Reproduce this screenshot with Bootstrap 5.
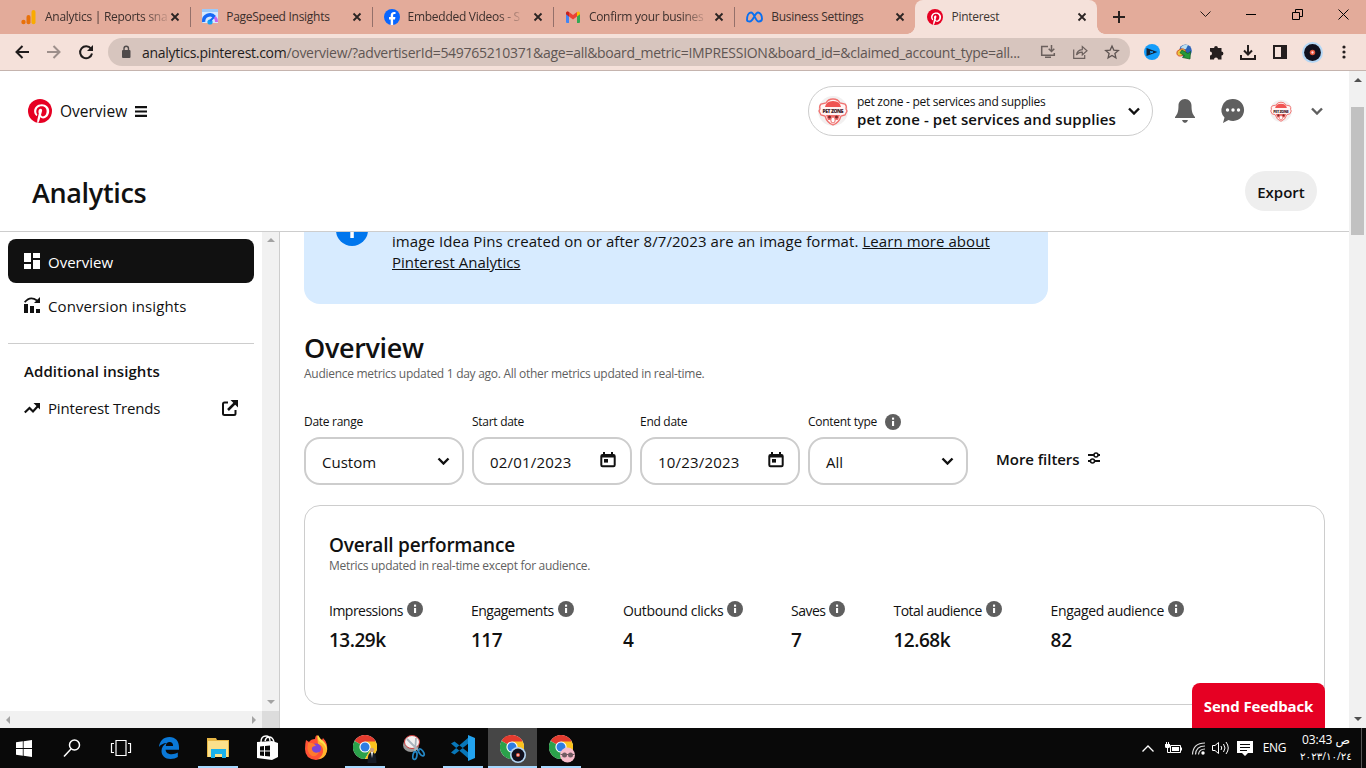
<!DOCTYPE html>
<html lang="en">
<head>
<meta charset="utf-8">
<title>Pinterest</title>
<link href="https://cdn.jsdelivr.net/npm/bootstrap@5.3.0/dist/css/bootstrap.min.css" rel="stylesheet">
<style>
html,body{height:100%;overflow:hidden}
body{font-family:"Open Sans","Noto Sans",sans-serif;font-stretch:92%;color:#111;font-size:16px;background:#fff}
svg{display:block;flex:none;overflow:visible}
.desktop{width:1366px;height:768px}
.t{white-space:nowrap;display:block}
.semi{font-weight:600}
/* browser frame */
.tabstrip{height:34px;background:#e3ab9a;padding-left:9px;font-size:12px;color:#3c2f2c;letter-spacing:-.28px}
.btab{width:181.3px;height:34px;padding-left:12px;padding-right:6px;position:relative}
.btab .ttl{margin-left:8px;white-space:nowrap;line-height:18px}
.btab.fade-end .ttl{-webkit-mask-image:linear-gradient(90deg,#000 80%,transparent 104%)}
.btab.sep::after{content:"";position:absolute;right:-1px;top:7px;width:1px;height:20px;background:#94706a}
.btab.current{background:#f5e1da;border-radius:8px 8px 0 0;color:#3c3533}
.btab.current::before{content:"";position:absolute;left:-8px;bottom:0;width:8px;height:8px;background:radial-gradient(circle at 0 0,transparent 7.5px,#f5e1da 8px)}
.btab.current::after{content:"";position:absolute;right:-8px;bottom:0;width:8px;height:8px;background:radial-gradient(circle at 100% 0,transparent 7.5px,#f5e1da 8px)}
.winctl{width:46px;height:28px}
.toolbar{height:37px;background:#f5e1da;border-bottom:1px solid #c5b4ae;padding-left:6px;padding-right:6px}
.cell{width:32px;height:36px}
.omni{width:1022px;height:28px;border-radius:14px;background:#d7c5be;margin-left:6px;margin-right:6px;padding-left:12px;padding-right:2px;font-size:14px;color:#5f5653}
.omni .host{color:#1f1d1d}
.omni .url{width:890px;margin-left:10px;white-space:nowrap;letter-spacing:-.28px}
/* page */
.viewport{height:657px}
.topbar{height:161px;border-bottom:1px solid #cdcdcd}
.navline{height:80px;padding:0 26px 0 28px}
.navtxt{font-size:15.5px;padding-top:2px}
.acct{width:345px;height:50px;border:1px solid #cdcdcd;border-radius:25px;padding:0 12px 0 9px}
.acctxt{padding-left:1px;padding-top:1px}
.a1{font-size:12px;line-height:15px;letter-spacing:-.28px}
.a2{font-size:15px;line-height:21px;letter-spacing:.08px}
.bell{margin-left:21px}.chat{margin-left:26px}.ava{margin-left:26px}.last{margin-left:19px}
.titleline{height:80px;padding:0 32px}
.h-an{font-size:27px;letter-spacing:-.35px;padding-top:4px}
.export{width:72px;height:40px;border-radius:20px;background:#eee;line-height:42px;font-size:15px}
.side{width:280px;border-right:1px solid #cdcdcd}
.sidelist{padding-top:7px;font-size:15px}
.sitem{height:44px;padding:0 16px;border-radius:8px;gap:8px}
.sitem.on{background:#111;color:#fff}
.s1,.s2{padding-top:2px}
.s2{letter-spacing:.1px}
.s3{padding-left:16px;line-height:24px;letter-spacing:.06px}
.s4{letter-spacing:-.18px}
.trends{margin-top:3px}
.rule{height:1px;background:#cdcdcd;margin:16px 0 15px}
.hbar{height:17px}
.corner{width:17px;background:#dcdcdc}
.sbar{background:#f1f1f1}
.pagebar{width:17px}
.thumb{width:13px;height:128px;background:#c1c1c1;margin-top:24px}
.notice{width:744px;height:72px;background:#d7ebff;border-radius:0 0 16px 16px;padding-left:88px;font-size:15px;line-height:21px;position:relative}
.notice a{color:#111}
.notice .t{position:relative;top:-1px}
.notice .ic{position:absolute;left:32px;top:-18px}
.n1{letter-spacing:.075px}
.h-ov{font-size:27px;line-height:32px;margin-top:28px;letter-spacing:-.35px}
.sub12{font-size:12px;line-height:18px;color:#5f5f5f;letter-spacing:-.285px}
.u1{margin-top:1px}
.filters{margin-top:23px}
.flabel{font-size:12px;height:31px;line-height:32px;letter-spacing:-.28px}
.fld{width:160px;height:48px;border:2px solid #cdcdcd;border-radius:16px;padding:2px 12px 0 16px;font-size:15px}
.fld .cal{margin-right:2px;margin-top:-4px}
.fld .chv{margin-top:-3px}
.f2{letter-spacing:.18px}
.more{margin-left:20px;padding-top:28px;font-size:15px}
.mf{letter-spacing:-.05px}
.perf{width:1021px;height:200px;border:1px solid #cdcdcd;border-radius:16px;padding:27px 24px 0;margin-top:20px}
.h-pf{font-size:19px;line-height:24px;letter-spacing:-.22px}
.metrics{display:grid;grid-template-columns:142px 152px 168px 102.5px 157px auto;margin-top:26px}
.mlabel{font-size:14px;line-height:20px;letter-spacing:-.34px}
.mlabel.tight{letter-spacing:-.52px}
.mval{font-size:19px;line-height:24px;margin-top:7px}
.mval.tight{letter-spacing:-.5px}
.feedback{position:absolute;left:1192px;top:683px;width:133px;height:45px;border-radius:8px 8px 0 0;background:#e60023;color:#fff;line-height:47px;text-align:center;font-weight:700;font-size:15px;letter-spacing:-.15px}
/* taskbar */
.taskbar{height:40px;background:#090909;color:#fff}
.task{width:49px;height:40px;position:relative}
.task.sys{width:48.300px}
.task.run::after{content:"";position:absolute;left:4px;right:5px;bottom:0;height:2px;background:#a6d8ff}
.task.act{background:#464646}
.task.act::after{left:0;right:0}
.tray{font-size:12px}
.bat{margin-left:11px}.wifi{margin-left:10px}.vol{margin-left:7px}.note{margin-left:8px}
.eng{margin-left:10px;letter-spacing:-.4px}
.clock{width:60px;line-height:17px;font-family:"Open Sans","DejaVu Sans",sans-serif;font-size:12px;letter-spacing:-.1px;margin-left:10px}
.clock bdo{font-size:10.300px;display:block}
.peek{width:1px;height:40px;background:#555;margin-left:5px;margin-right:4px}
</style>
</head>
<body>
<svg width="0" height="0" class="position-absolute">
<defs>
<symbol id="x" viewBox="0 0 10 10"><path d="M1.500 1.500l7 7M8.500 1.500l-7 7" stroke="#2b2423" stroke-width="1.800" fill="none"/></symbol>
<symbol id="pin" viewBox="0 0 24 24"><circle cx="12" cy="12" r="12" fill="#e60023"/><path fill="#fff" d="M9.300 23.700c-.1-1-.1-2.300.1-3.300l1.400-6s-.35-.7-.35-1.750c0-1.650.95-2.900 2.150-2.900 1 0 1.500.75 1.500 1.670 0 1-.65 2.540-1 3.950-.28 1.180.6 2.140 1.760 2.140 2.100 0 3.730-2.220 3.730-5.430 0-2.840-2.040-4.820-4.950-4.820-3.370 0-5.350 2.530-5.350 5.150 0 1 .39 2.100.88 2.700.1.120.11.220.08.340l-.33 1.330c-.05.22-.17.260-.4.160-1.470-.69-2.400-2.840-2.400-4.570 0-3.720 2.700-7.140 7.800-7.140 4.100 0 7.270 2.920 7.270 6.820 0 4.070-2.560 7.340-6.120 7.340-1.200 0-2.320-.62-2.700-1.350l-.74 2.800c-.27 1.030-1 2.320-1.480 3.100z"/></symbol>
<symbol id="chev" viewBox="0 0 12 8"><path d="M1 1.500l5 5 5-5" fill="none" stroke="currentColor" stroke-width="2.400"/></symbol>
<symbol id="info" viewBox="0 0 16 16"><circle cx="8" cy="8" r="8" fill="#5f5f5f"/><rect x="7" y="3.600" width="2.100" height="2.100" fill="#fff"/><rect x="7" y="7" width="2.100" height="5" fill="#fff"/></symbol>
<symbol id="cal" viewBox="0 0 16 16"><path fill="#111" fill-rule="evenodd" d="M3 0h2v2h6V0h2v2h.500A2.200 2.200 0 0 1 15.700 4.200V13a2.200 2.200 0 0 1-2.200 2.200h-11A2.200 2.200 0 0 1 .3 13V4.200A2.200 2.200 0 0 1 2.500 2H3zM2.300 5.400V13c0 .2.100.3.300.3h10.800c.2 0 .3-.1.300-.3V5.400z"/><rect x="4" y="7" width="4" height="3.600" fill="#111"/></symbol>
<symbol id="pet" viewBox="0 0 30 30"><circle cx="15" cy="15" r="15" fill="#f2f0f0"/><path d="M8 7q2-4 7-4t7 4l5 1q2 2 1 5l1 2-2 4-4 1q-2 7-8 9-6-2-8-9l-4-1-2-4 1-2q-1-3 1-5z" fill="#fff4f3" stroke="#f0716f" stroke-width="1.300"/><path d="M7 11q1-6 8-6t8 6z" fill="#f05452"/><path d="M8 19h14l-2 5h-3l-2-3-2 3h-3z" fill="#ee6b69"/><circle cx="11.500" cy="21" r="1.500" fill="#7d2928"/><circle cx="18.500" cy="21" r="1.500" fill="#7d2928"/><ellipse cx="15" cy="24" rx="2.200" ry="3" fill="#fff" stroke="#ee6b69"/><text x="4.500" y="17.300" font-family="Open Sans" font-weight="800" font-size="5" textLength="21" fill="#40232b">PET ZONE</text></symbol>
<symbol id="chrome" viewBox="0 0 24 24"><circle cx="12" cy="12" r="12" fill="#fff"/><path d="M12 12L1.600 6A12 12 0 0 1 22.400 6z" fill="#e33b2e"/><path d="M1.600 6A12 12 0 0 0 12 24l5.200-9-5.200-3z" fill="#2ba14b"/><path d="M22.400 6A12 12 0 0 1 12 24l5.200-9L12 6z" fill="#fcc31e"/><path d="M12 6.500H22.600L20 3H4z" fill="#e33b2e"/><circle cx="12" cy="12" r="5.600" fill="#fff"/><circle cx="12" cy="12" r="4.500" fill="#2f7de1"/></symbol>
<symbol id="vinyl" viewBox="0 0 20 20"><circle cx="10" cy="10" r="10" fill="#b5d7f5"/><circle cx="10" cy="10" r="8" fill="#10101e"/><circle cx="10" cy="10" r="2.600" fill="#e2553b"/><circle cx="10" cy="10" r="1.100" fill="#ffd9e6"/></symbol>
</defs></svg>

<div class="desktop d-flex flex-column position-relative">
<div class="tabstrip d-flex">
  <div class="btab sep fade-end d-flex align-items-center"><svg width="16" height="16"><circle cx="2.500" cy="13" r="2.200" fill="#e8710a"/><rect x="5.500" y="6" width="4" height="9.300" rx="2" fill="#e8710a"/><rect x="10.500" y="1" width="4" height="14.300" rx="2" fill="#f9ab00"/></svg><span class="ttl">Analytics | Reports sna</span><svg width="10" height="10" class="ms-auto me-1"><use href="#x"/></svg></div>
  <div class="btab sep d-flex align-items-center"><svg width="16" height="16"><path fill="#d5e9ff" d="M0 0h16v14H0z"/><path fill="#9ccafb" d="M0 0h16v3H0z"/><path d="M1.700 13a6.300 6.300 0 0 1 11-5" fill="none" stroke="#1769f5" stroke-width="3.400"/><path d="M12.700 8q2 2 1.800 5" fill="none" stroke="#c765f0" stroke-width="3"/><circle cx="8" cy="13" r="2.600" fill="#16a0f0"/><path d="M8 12l4-4" stroke="#1769f5" stroke-width="2"/></svg><span class="ttl">PageSpeed Insights</span><svg width="10" height="10" class="ms-auto me-1"><use href="#x"/></svg></div>
  <div class="btab sep fade-end d-flex align-items-center"><svg width="16" height="16"><circle cx="8" cy="8" r="8" fill="#0866ff"/><path fill="#fff" d="M6.700 15.900V10.500H5V8.100h1.700V6.600c0-2.500 1.200-3.700 3.500-3.700l1.300.1v2.100h-.9c-1.100 0-1.500.4-1.500 1.500v1.500h2.300l-.4 2.400H9.100v5.400z"/></svg><span class="ttl">Embedded Videos - S</span><svg width="10" height="10" class="ms-auto me-1"><use href="#x"/></svg></div>
  <div class="btab sep fade-end d-flex align-items-center"><svg width="16" height="16" viewBox="0 0 16 16"><path fill="#4285f4" d="M1 4h3v10H2a1 1 0 0 1-1-1z"/><path fill="#34a853" d="M12 4h3v9a1 1 0 0 1-1 1h-2z"/><path fill="#ea4335" d="M1 4.500V4q.5-2.500 3-1l4 3 4-3v4.500l-4 3-4-3z"/><path fill="#c5221f" d="M1 4q.5-2.500 3-1v4.500L1 5.200z"/><path fill="#fbbc04" d="M15 4q-.5-2.500-3-1v4.500l3-2.300z"/></svg><span class="ttl">Confirm your busines</span><svg width="10" height="10" class="ms-auto me-1"><use href="#x"/></svg></div>
  <div class="btab d-flex align-items-center"><svg width="17" height="16" viewBox="0 0 17 16"><path d="M1 11C1 7 2.500 3.500 5 3.500c3.300 0 4.500 9 7.700 9 2 0 3.300-.7 3.300-2.700 0-3-1.500-6.300-3.900-6.300-3.300 0-4.900 9-8.300 9-1.700 0-2.800-.5-2.800-1.500z" fill="none" stroke="#0a6ff0" stroke-width="1.900"/></svg><span class="ttl">Business Settings</span><svg width="10" height="10" class="ms-auto me-1"><use href="#x"/></svg></div>
  <div class="btab current d-flex align-items-center"><svg width="16" height="16"><use href="#pin"/></svg><span class="ttl">Pinterest</span><svg width="10" height="10" class="ms-auto me-1"><use href="#x"/></svg></div>
  <svg width="12" height="12" class="ms-3 align-self-center"><path d="M6 0v12M0 6h12" stroke="#29211f" stroke-width="2"/></svg>
  <div class="d-flex ms-auto">
    <div class="winctl d-flex align-items-center justify-content-center"><svg width="11" height="6"><path d="M.5.5l5 5 5-5" fill="none" stroke="#221a18"/></svg></div>
    <div class="winctl d-flex align-items-center justify-content-center"><svg width="10" height="1"><path d="M0 .5h10" stroke="#000"/></svg></div>
    <div class="winctl d-flex align-items-center justify-content-center"><svg width="11" height="11"><path d="M.5 3.500h7v7h-7zM3.500 3V.5h7v7H8" fill="none" stroke="#000"/></svg></div>
    <div class="winctl d-flex align-items-center justify-content-center"><svg width="11" height="11"><path d="M.5.5l10 10M10.500.5l-10 10" stroke="#000"/></svg></div>
  </div>
</div>
<div class="toolbar d-flex align-items-center">
  <div class="cell d-flex align-items-center justify-content-center"><svg width="14" height="14"><path d="M14 7H1.500M7.500 1L1.500 7l6 6" fill="none" stroke="#1f1b1b" stroke-width="2"/></svg></div>
  <div class="cell d-flex align-items-center justify-content-center"><svg width="14" height="14"><path d="M0 7h12.500M6.500 1l6 6-6 6" fill="none" stroke="#9d8f8b" stroke-width="2"/></svg></div>
  <div class="cell d-flex align-items-center justify-content-center"><svg width="14" height="14"><path d="M12 3.700A6 6 0 1 0 13 8.500" fill="none" stroke="#1f1b1b" stroke-width="2"/><path d="M14 0v6H8z" fill="#1f1b1b"/></svg></div>
  <div class="omni d-flex align-items-center"><svg width="12" height="14"><rect x="2" y="5" width="8.500" height="8" rx="1" fill="#504b4b"/><path d="M4 5V3.500a2.250 2.250 0 0 1 4.500 0V5" fill="none" stroke="#504b4b" stroke-width="1.400"/></svg><span class="url"><span class="host">analytics.pinterest.com</span>/overview/?advertiserId=549765210371&amp;age=all&amp;board_metric=IMPRESSION&amp;board_id=&amp;claimed_account_type=all...</span>
    <div class="cell ms-auto d-flex align-items-center justify-content-center"><svg width="14" height="14"><path d="M7 1.500H.7v8.700h12.600V8" fill="none" stroke="#6b605d" stroke-width="1.500"/><path d="M4 12.300h6M10.500 0v6M7.700 3.700l2.800 2.800 2.800-2.800" fill="none" stroke="#6b605d" stroke-width="1.500"/></svg></div>
    <div class="cell d-flex align-items-center justify-content-center"><svg width="15" height="14"><path d="M.7 4.500v8.800h11V10M3.500 10Q4 5 9.300 4.600V1.500l4.700 4.200L9.300 10V7.200Q5.500 7 3.500 10z" fill="none" stroke="#6b605d" stroke-width="1.200"/></svg></div>
    <div class="cell d-flex align-items-center justify-content-center"><svg width="14" height="14" viewBox="0 0 14 14"><path d="M7 1l1.800 4.100 4.500.4-3.400 2.900 1 4.400L7 10.500l-3.900 2.300 1-4.400L.7 5.500l4.500-.4z" fill="none" stroke="#5e5452" stroke-width="1.300"/></svg></div>
  </div>
  <div class="cell d-flex align-items-center justify-content-center"><svg width="16" height="16"><circle cx="8" cy="8" r="8" fill="#159dfa"/><path d="M2.500 4l11 4-11 4z" fill="#122337"/><path d="M6 7.500l3 .5-3 1" stroke="#159dfa" fill="none"/></svg></div>
  <div class="cell d-flex align-items-center justify-content-center"><svg width="16" height="16"><circle cx="9.500" cy="6.800" r="6.300" fill="#2a62b8"/><path d="M5 3q3-3 7-2l-2 4-4 1z" fill="#b9dff0"/><ellipse cx="5" cy="8.500" rx="4.500" ry="3.300" fill="#e9c63c" stroke="#d64927" stroke-width=".8" transform="rotate(-20 5 8)"/><path d="M6 6l6 3.500 2.500-2-.5 7.500-7.500-1.500 2-1.700-4.500-3z" fill="#259a3a" stroke="#125a20" stroke-width=".7"/></svg></div>
  <div class="cell d-flex align-items-center justify-content-center"><svg width="15" height="15" viewBox="0 0 15 15"><path fill="#241e1e" d="M1 3h4.100a1.900 1.900 0 1 1 3.800 0H12.500v3.600a1.900 1.900 0 1 1 0 3.800V14.500H9a2 2 0 0 0-4 0H1V10.500a2 2 0 0 0 0-4z"/></svg></div>
  <div class="cell d-flex align-items-center justify-content-center"><svg width="16" height="15"><path d="M8 0v9M4 5.500l4 4 4-4M1 10v4h14v-4" fill="none" stroke="#241e1e" stroke-width="2"/></svg></div>
  <div class="cell d-flex align-items-center justify-content-center"><svg width="14" height="14"><path d="M1 1h12v12H1z" fill="none" stroke="#241e1e" stroke-width="2"/><path d="M8 1h5v12H8z" fill="#241e1e"/></svg></div>
  <div class="cell d-flex align-items-center justify-content-center"><svg width="21" height="21"><use href="#vinyl"/></svg></div>
  <div class="cell d-flex align-items-center justify-content-center"><svg width="4" height="14"><g fill="#241e1e"><circle cx="2" cy="2" r="1.600"/><circle cx="2" cy="7" r="1.600"/><circle cx="2" cy="12" r="1.600"/></g></svg></div>
</div>

<div class="viewport d-flex">
 <div class="flex-grow-1 d-flex flex-column overflow-hidden">
  <div class="topbar flex-shrink-0">
   <div class="navline d-flex align-items-center">
     <svg width="24" height="24"><use href="#pin"/></svg>
     <span class="t ms-2 navtxt">Overview</span>
     <svg width="12" height="11" class="ms-2"><path d="M0 1.200h12M0 5.500h12M0 9.800h12" stroke="#111" stroke-width="2.200"/></svg>
     <div class="acct d-flex align-items-center ms-auto"><svg width="30" height="30"><use href="#pet"/></svg>
       <div class="ms-2 acctxt"><span class="t a1">pet zone - pet services and supplies</span><span class="t a2 semi">pet zone - pet services and supplies</span></div>
       <svg width="12" height="8" class="ms-auto"><use href="#chev"/></svg></div>
     <svg width="22" height="24" viewBox="0 0 22 24" class="bell"><path fill="#5f5f5f" d="M11 0c-4 0-6.500 3-6.500 6.500 0 6-1 8.500-3.500 11.500v1h20v-1c-2.500-3-3.500-5.500-3.500-11.500C17.500 3 15 0 11 0zM8 21h6q-.8 3-3 3t-3-3z"/></svg>
     <svg width="22" height="24" viewBox="0 0 22 24" class="chat"><path fill="#5f5f5f" d="M11 0a11 11 0 1 1-4.500 21L1 24l1.500-5.500A11 11 0 0 1 11 0z"/><g fill="#fff"><circle cx="5.500" cy="11" r="1.700"/><circle cx="11" cy="11" r="1.700"/><circle cx="16.500" cy="11" r="1.700"/></g></svg>
     <svg width="22" height="22" class="ava"><use href="#pet"/></svg>
     <svg width="12" height="8" class="last" color="#5f5f5f"><use href="#chev"/></svg>
   </div>
   <div class="d-flex align-items-center justify-content-between titleline"><span class="t h-an semi">Analytics</span><div class="export text-center semi">Export</div></div>
  </div>
  <div class="d-flex flex-grow-1 overflow-hidden">
   <div class="side d-flex flex-column flex-shrink-0">
    <div class="d-flex flex-grow-1">
     <div class="px-2 flex-grow-1 sidelist">
       <div class="sitem on d-flex align-items-center"><svg width="16" height="16"><path fill="#fff" d="M0 0h7v9H0zM9 0h7v5H9zM0 11h7v5H0zM9 7h7v9H9z"/></svg><span class="t s1">Overview</span></div>
       <div class="sitem d-flex align-items-center"><svg width="16" height="16" viewBox="0 0 16 16"><path fill="#111" d="M0 7h4v9H0zM6 9h4v7H6zM12 12h4v4h-4z"/><path d="M.7 5.300Q6-1.500 13 3.500" fill="none" stroke="#111" stroke-width="1.800"/><path fill="#111" d="M16 0v6h-6z"/></svg><span class="t s2">Conversion insights</span></div>
       <div class="rule"></div>
       <div class="t semi s3">Additional insights</div>
       <div class="sitem d-flex align-items-center trends"><svg width="16" height="12" viewBox="0 0 16 12"><path d="M.8 10.500L5.500 6l3.500 3.500 5-5.500" fill="none" stroke="#111" stroke-width="2.200"/><path fill="#111" d="M16 1v6.500L9.500 1z"/></svg><span class="t s4">Pinterest Trends</span><svg width="16" height="16" class="ms-auto"><path d="M6 2.500H2.500Q1 2.500 1 4v9.500Q1 15 2.500 15H12q1.500 0 1.500-1.500V10" fill="none" stroke="#111" stroke-width="2"/><path d="M6 10l7-7" stroke="#111" stroke-width="2.500"/><path fill="#111" d="M8.500 0H16v7.500z"/></svg></div>
     </div>
     <div class="sbar pagebar d-flex flex-column justify-content-between align-items-center py-1"><svg width="8" height="8"><path fill="#a3a3a3" d="M0 6h8L4 2z"/></svg><svg width="8" height="8"><path fill="#a3a3a3" d="M0 1h8L4 5z"/></svg></div>
    </div>
    <div class="d-flex hbar"><div class="sbar flex-grow-1 d-flex justify-content-between align-items-center px-1"><svg width="8" height="8"><path fill="#a3a3a3" d="M6 0v8L2 4z"/></svg><svg width="8" height="8"><path fill="#a3a3a3" d="M2 0v8l4-4z"/></svg></div><div class="corner"></div></div>
   </div>
   <div class="ps-4 flex-grow-1 overflow-hidden">
     <div class="notice"><svg class="ic" width="32" height="32"><circle cx="16" cy="16" r="16" fill="#0076ed"/><path d="M14.300 13h3.500v11h-3.500z" fill="#fff"/></svg><span class="t n1">image Idea Pins created on or after 8/7/2023 are an image format. <a href="#">Learn more about</a></span><span class="t n2"><a href="#">Pinterest Analytics</a></span></div>
     <div class="t h-ov semi">Overview</div>
     <div class="t sub12 u1">Audience metrics updated 1 day ago. All other metrics updated in real-time.</div>
     <div class="d-flex gap-2 filters">
       <div><div class="flabel">Date range</div><div class="fld d-flex align-items-center justify-content-between"><span>Custom</span><svg width="13" height="8" class="chv"><use href="#chev"/></svg></div></div>
       <div><div class="flabel">Start date</div><div class="fld d-flex align-items-center justify-content-between"><span class="f2">02/01/2023</span><svg width="16" height="16" class="cal"><use href="#cal"/></svg></div></div>
       <div><div class="flabel">End date</div><div class="fld d-flex align-items-center justify-content-between"><span class="f2">10/23/2023</span><svg width="16" height="16" class="cal"><use href="#cal"/></svg></div></div>
       <div><div class="flabel d-flex align-items-center gap-2"><span>Content type</span><svg width="16" height="16"><use href="#info"/></svg></div><div class="fld d-flex align-items-center justify-content-between"><span>All</span><svg width="13" height="8" class="chv"><use href="#chev"/></svg></div></div>
       <div class="d-flex align-items-center more semi"><span class="t mf">More filters</span><svg width="12" height="12" class="ms-2 mb-1"><path d="M0 3h12M0 9h12" stroke="#111" stroke-width="1.800"/><circle cx="8" cy="3" r="2" fill="#fff" stroke="#111" stroke-width="1.500"/><circle cx="4.500" cy="9" r="2" fill="#fff" stroke="#111" stroke-width="1.500"/></svg></div>
     </div>
     <div class="perf">
       <div class="t h-pf semi">Overall performance</div>
       <div class="t sub12">Metrics updated in real-time except for audience.</div>
       <div class="metrics">
         <div><div class="mlabel tight d-flex gap-1"><span class="t">Impressions</span><svg width="16" height="16"><use href="#info"/></svg></div><div class="mval tight semi">13.29k</div></div>
         <div><div class="mlabel tight d-flex gap-1"><span class="t">Engagements</span><svg width="16" height="16"><use href="#info"/></svg></div><div class="mval tight semi">117</div></div>
         <div><div class="mlabel d-flex gap-1"><span class="t">Outbound clicks</span><svg width="16" height="16"><use href="#info"/></svg></div><div class="mval semi">4</div></div>
         <div><div class="mlabel tight d-flex gap-1"><span class="t">Saves</span><svg width="16" height="16"><use href="#info"/></svg></div><div class="mval semi">7</div></div>
         <div><div class="mlabel tight d-flex gap-1"><span class="t">Total audience</span><svg width="16" height="16"><use href="#info"/></svg></div><div class="mval tight semi">12.68k</div></div>
         <div><div class="mlabel d-flex gap-1"><span class="t">Engaged audience</span><svg width="16" height="16"><use href="#info"/></svg></div><div class="mval semi">82</div></div>
       </div>
     </div>
   </div>
  </div>
 </div>
 <div class="sbar pagebar d-flex flex-column align-items-center py-1"><svg width="8" height="8"><path fill="#505050" d="M0 7h8L4 3z"/></svg><div class="thumb"></div><svg width="8" height="8" class="mt-auto"><path fill="#505050" d="M0 1h8L4 5z"/></svg></div>
</div>
<div class="feedback">Send Feedback</div>

<div class="taskbar d-flex align-items-center">
  <div class="task sys d-flex align-items-center justify-content-center"><svg width="16" height="17" viewBox="0 0 16 17"><path fill="#fff" d="M0 2.300L6.800 1.300V8H0zM7.600 1.200L16 0v8H7.600zM0 9h6.800v6.700L0 14.700zM7.600 9H16v8l-8.400-1.200z"/></svg></div>
  <div class="task sys d-flex align-items-center justify-content-center"><svg width="16" height="18"><circle cx="10.500" cy="6" r="5" fill="none" stroke="#fff" stroke-width="1.500"/><path d="M7 10L0 17.500" stroke="#fff" stroke-width="1.500"/></svg></div>
  <div class="task sys d-flex align-items-center justify-content-center"><svg width="20" height="16"><path d="M5 .5h10v15H5zM3 3.500H.5v9H3M17 3.500h2.500v9H17" fill="none" stroke="#fff" stroke-width="1.200"/></svg></div>
  <div class="task d-flex align-items-center justify-content-center"><svg width="20" height="22" viewBox="0 0 20 22"><path fill="#0a78d7" d="M0 10C.6 4 4.500 0 10.500 0 16.500 0 20 4.200 20 10v2.700H6.600c.2 3 2.700 4.500 6 4.500 2.200 0 4.400-.6 6.200-1.700v4.600C17 21.300 14.500 22 11.500 22 6 22 2.500 18.500 2.500 14c0-3.600 2-6.500 5.200-8C4.500 6.200 1.800 7.500 0 10zM6.800 9h7.300c0-2.600-1.300-4-3.500-4S7 6.600 6.800 9z"/></svg></div>
  <div class="task run d-flex align-items-center justify-content-center"><svg width="22" height="20"><path fill="#e7b646" d="M0 0h9l1 2h12v17H0z"/><path fill="#fbe08b" d="M1 3h20v16H1z"/><path fill="#19b1ec" d="M4 11h15v9h-4v-4H8v4H4z"/></svg></div>
  <div class="task d-flex align-items-center justify-content-center"><svg width="21" height="26" viewBox="0 0 21 26"><path fill="#fff" d="M0 7l15-1v19L0 23zM15 6l6 2v14l-6 3z"/><path d="M4 7q0-6 5-6 4 0 4 5M8 6q1-4 4-4 4 0 5 5" stroke="#fff" stroke-width="1.400" fill="none"/><path fill="#080808" d="M3 11.500l4-.5v4.500H3zM8 11l5-.5v5H8zM3 16.500h4V21l-4-.5zM8 16.500h5v5L8 21z"/></svg></div>
  <div class="task d-flex align-items-center justify-content-center"><svg width="24" height="26" viewBox="0 0 24 26"><path fill="#ff5136" d="M2 5l3 2q2-3 6-3 0-3 2-4 2 3 5 5l1-2q5 5 4 12-1 9-11 10Q1 24 1 14q0-5 1-9z"/><path fill="#ffb42c" d="M13 0q2 4 6 6 5 5 4 10-2 8-9 8 6-4 5-10-1-4-5-5z"/><path fill="#ffe14a" d="M14 0q2 4 5 6 4 4 3.500 9Q21 9 16 7 13 4 14 0z"/><circle cx="12" cy="13.500" r="5" fill="#7b44d9"/><path fill="#ff7a2e" d="M4 8q5-1 8 3-5 0-4 4 2 4 7 2-2 5-7 4-6-3-4-13z"/></svg></div>
  <div class="task run d-flex align-items-center justify-content-center"><svg width="24" height="26" viewBox="0 0 24 26"><use href="#chrome" width="24" height="24"/><circle cx="19" cy="15" r="2.200" fill="#c99e83"/><path d="M14.500 28q0-11 4.500-11t4.500 11z" fill="#151b26"/><path d="M18 17h2l-1 6z" fill="#fff"/></svg></div>
  <div class="task d-flex align-items-center justify-content-center"><svg width="22" height="26" viewBox="0 0 22 26"><ellipse cx="8" cy="10" rx="8" ry="7" fill="#999"/><ellipse cx="9" cy="7" rx="7.500" ry="6.500" fill="#f4f1f1" stroke="#cb3a3a"/><path d="M4 4l12 12M13 3l-1 14" stroke="#a9b4bd" stroke-width="1.800"/><ellipse cx="12" cy="20.500" rx="2" ry="4" fill="none" stroke="#2486c4" stroke-width="1.700" transform="rotate(10 12 20)"/><ellipse cx="18" cy="17.500" rx="2" ry="4" fill="none" stroke="#2486c4" stroke-width="1.700" transform="rotate(-35 18 17)"/></svg></div>
  <div class="task run d-flex align-items-center justify-content-center"><svg width="24" height="26" viewBox="0 0 24 26"><path d="M0 8.500L3.500 6.500 18 18v6zM0 17.500L3.500 19.500 18 8V2z" fill="#0877b9"/><path fill="#23a3ef" d="M17 0l7 3v20l-7 3z"/></svg></div>
  <div class="task run act d-flex align-items-center justify-content-center"><svg width="24" height="26" viewBox="0 0 24 26"><use href="#chrome" width="24" height="24"/><use href="#vinyl" x="10" y="12" width="16" height="16"/></svg></div>
  <div class="task run d-flex align-items-center justify-content-center"><svg width="24" height="26" viewBox="0 0 24 26"><use href="#chrome" width="24" height="24"/><circle cx="18.500" cy="20" r="7.500" fill="#f7bccb"/><path d="M11.500 19.500h14" stroke="#705b62"/><circle cx="15.500" cy="20" r="2.500" fill="#705b62"/><circle cx="21.500" cy="20" r="2.500" fill="#705b62"/></svg></div>
  <div class="tray d-flex align-items-center ms-auto">
    <svg width="12" height="7"><path d="M.5 6.500L6 1l5.500 5.500" fill="none" stroke="#fff" stroke-width="1.300"/></svg>
    <svg width="17" height="12" class="bat"><path d="M5.500 3.500h10v7h-10z" fill="none" stroke="#fff"/><path d="M7 5h7v4H7zM16 5.500h1v3h-1zM0 2h5v2.500q0 1.500-1.500 1.500h-2Q0 6 0 4.500zM1 0h1v2H1zM3 0h1v2H3z" fill="#fff"/><path d="M2.500 6v4.500h3" fill="none" stroke="#fff"/></svg>
    <svg width="13" height="13" class="wifi"><path d="M.5 12.500Q1 1 13 1M3.500 12.500Q4 4 13 4M6.500 12.500Q7 7 13 7" fill="none" stroke="#ddd" stroke-width="1.200"/><circle cx="11" cy="11" r="1.700" fill="#fff"/></svg>
    <svg width="17" height="14" class="vol"><path d="M.5 4.500h2.500l3.500-3v11L3 9.500H.5zM9 5q1.500 2 0 4M11.500 3q3 4 0 8M14 1q4.500 6 0 12" fill="none" stroke="#fff"/></svg>
    <svg width="16" height="15" class="note"><path fill="#fff" d="M0 0h16v12h-5l-3 3-3-3H0z"/><path d="M3 3.500h10M3 6.500h10M3 9.500h7" stroke="#090909"/></svg>
    <span class="eng">ENG</span>
    <div class="clock text-center"><div dir="ltr">03:43 ص</div><bdo dir="ltr">٢٠٢٣/١٠/٢٤</bdo></div>
    <div class="peek"></div>
  </div>
</div>
</div>
<script src="https://cdn.jsdelivr.net/npm/bootstrap@5.3.0/dist/js/bootstrap.bundle.min.js"></script>
</body>
</html>
